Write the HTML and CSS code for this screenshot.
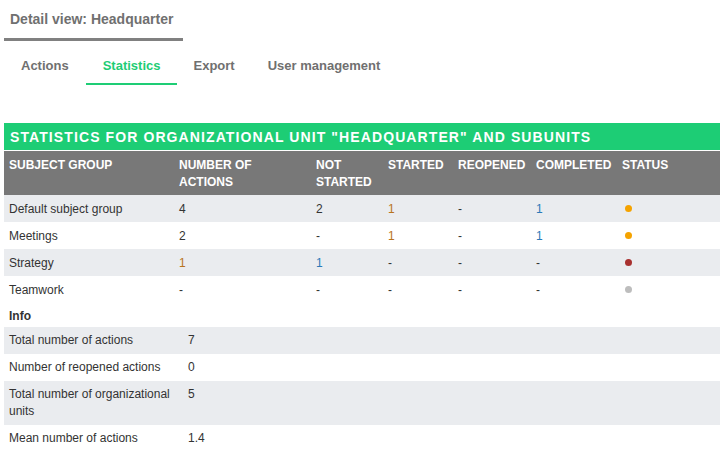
FILE: index.html
```html
<!DOCTYPE html>
<html>
<head>
<meta charset="utf-8">
<link rel="stylesheet" href="styles.css">
</head>
<body>
<div class="page">
  <div class="title">Detail view: Headquarter</div>
  <nav class="tabs">
    <span class="tab">Actions</span>
    <span class="tab active">Statistics</span>
    <span class="tab">Export</span>
    <span class="tab">User management</span>
  </nav>
  <div class="panel">
    <div class="panel-title">STATISTICS FOR ORGANIZATIONAL UNIT "HEADQUARTER" AND SUBUNITS</div>
    <table class="stats">
      <colgroup>
        <col class="c1"><col class="c2"><col class="c3"><col class="c4"><col class="c5"><col class="c6"><col class="c7">
      </colgroup>
      <thead>
        <tr>
          <th>SUBJECT GROUP</th>
          <th>NUMBER OF<br>ACTIONS</th>
          <th>NOT<br>STARTED</th>
          <th>STARTED</th>
          <th>REOPENED</th>
          <th>COMPLETED</th>
          <th>STATUS</th>
        </tr>
      </thead>
      <tbody>
        <tr class="alt">
          <td>Default subject group</td><td>4</td><td>2</td><td class="orange">1</td><td>-</td><td class="blue">1</td><td><span class="dot dot-orange"></span></td>
        </tr>
        <tr>
          <td>Meetings</td><td>2</td><td>-</td><td class="orange">1</td><td>-</td><td class="blue">1</td><td><span class="dot dot-orange"></span></td>
        </tr>
        <tr class="alt">
          <td>Strategy</td><td class="orange">1</td><td class="blue">1</td><td>-</td><td>-</td><td>-</td><td><span class="dot dot-red"></span></td>
        </tr>
        <tr>
          <td>Teamwork</td><td>-</td><td>-</td><td>-</td><td>-</td><td>-</td><td><span class="dot dot-gray"></span></td>
        </tr>
      </tbody>
    </table>
    <table class="info">
      <colgroup><col class="i1"><col class="i2"></colgroup>
      <tbody>
        <tr class="info-head"><th colspan="2">Info</th></tr>
        <tr class="alt"><td>Total number of actions</td><td>7</td></tr>
        <tr><td>Number of reopened actions</td><td>0</td></tr>
        <tr class="alt"><td>Total number of organizational units</td><td>5</td></tr>
        <tr><td>Mean number of actions</td><td>1.4</td></tr>
      </tbody>
    </table>
  </div>
</div>
</body>
</html>
```
FILE: styles.css
```css
* { box-sizing: border-box; }
html, body { margin: 0; padding: 0; background: #fff; }
body {
  font-family: "Liberation Sans", Arial, sans-serif;
  font-size: 12px;
  color: #333;
}
.page {
  padding: 0 7px 0 4px;
  width: 727px;
}
.title {
  display: inline-block;
  width: 179px;
  padding: 11px 6px 11px;
  font-size: 14px;
  line-height: 16px;
  font-weight: bold;
  color: #707070;
  border-bottom: 3px solid #808080;
}
.tabs {
  display: flex;
}
.tab {
  padding: 17px 17px 9px;
  font-size: 13px;
  line-height: 16px;
  font-weight: bold;
  color: #707070;
  border-bottom: 2px solid transparent;
}
.tab:last-child { padding-left: 16px; }
.tab:nth-child(3) { padding-left: 16px; }
.tab.active {
  color: #1ecd75;
  border-bottom-color: #1ecd75;
}
.panel {
  margin-top: 38px;
  width: 716px;
}
.panel-title {
  height: 28px;
  padding: 6px 6px 0;
  background: #1dcd75;
  border-bottom: 1px solid #fff;
  color: #fff;
  font-weight: bold;
  font-size: 14px;
  line-height: 17px;
  letter-spacing: 1.1px;
  white-space: nowrap;
}
table {
  width: 716px;
  border-collapse: collapse;
  table-layout: fixed;
}
th, td {
  padding: 5px 5px;
  line-height: 17px;
  text-align: left;
  vertical-align: top;
  font-weight: normal;
}
.stats th, .stats td {
  padding: 6px 5px 4px;
}
.stats thead th {
  background: #787878;
  color: #fff;
  font-weight: bold;
}
.c1 { width: 170px; }
.c2 { width: 137px; }
.c3 { width: 72px; }
.c4 { width: 70px; }
.c5 { width: 78px; }
.c6 { width: 86px; }
.c7 { width: 103px; }
tr.alt td { background: #eaecef; }
.orange { color: #b8741c; }
.blue { color: #2b7ab8; }
.dot {
  display: inline-block;
  width: 7px;
  height: 7px;
  border-radius: 50%;
  margin-left: 3px;
  vertical-align: 1px;
}
.dot-orange { background: #f5a300; }
.dot-red { background: #a8312f; }
.dot-gray { background: #bdbdbd; }
.i1 { width: 179px; }
.i2 { width: 537px; }
.info-head th {
  font-weight: bold;
  padding: 5px 5px 2px;
  color: #333;
}
```
